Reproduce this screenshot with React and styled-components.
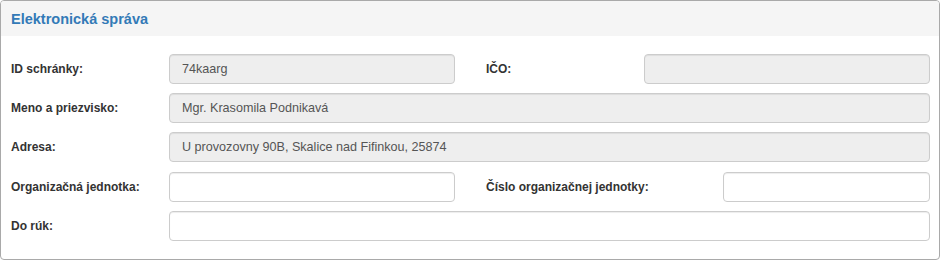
import React from "react";
import styled, { createGlobalStyle } from "styled-components";

const Global = createGlobalStyle`
  html, body { margin: 0; padding: 0; background: #fff; }
  body { font-family: "Liberation Sans", Arial, sans-serif; }
  * { box-sizing: border-box; }
`;

const Panel = styled.section`
  width: 940px;
  height: 260px;
  border: 1px solid #a9a9a9;
  border-radius: 4px;
  overflow: hidden;
  background: #fff;
`;

const Header = styled.div`
  height: 35px;
  background: #f5f5f5;
  display: flex;
  align-items: center;
  padding-left: 10px;
`;

const Title = styled.h3`
  margin: 0;
  font-size: 14.5px;
  font-weight: bold;
  color: #337ab7;
`;

const Body = styled.div`
  padding: 18px 9px 0 10px;
  display: flex;
  flex-direction: column;
  gap: 9px;
`;

const Row = styled.div`
  display: grid;
  grid-template-columns: ${(p) => p.$cols};
  align-items: center;
  height: 30px;
  margin-top: ${(p) => (p.$extra ? "1px" : "0")};
`;

const Label = styled.label`
  font-size: 12px;
  font-weight: bold;
  color: #333;
`;

const Input = styled.input`
  height: 30px;
  width: 100%;
  border: 1px solid #ccc;
  border-radius: 4px;
  padding: 0 12px;
  font-family: "Liberation Sans", Arial, sans-serif;
  font-size: 12.6px;
  color: #555;
  background: ${(p) => (p.readOnly ? "#eeeeee" : "#fff")};
  box-shadow: inset 0 1px 1px rgba(0, 0, 0, 0.075);
  outline: none;
`;

const Spacer = styled.div``;

const PAIR = "158px 286px 31px 158px 286px";
const PAIR2 = "158px 286px 31px 237px 207px";
const FULL = "158px 1fr";

export default function App() {
  return (
    <>
      <Global />
      <Panel>
        <Header>
          <Title>Elektronická správa</Title>
        </Header>
        <Body>
          <Row $cols={PAIR}>
            <Label>ID schránky:</Label>
            <Input readOnly defaultValue="74kaarg" />
            <Spacer />
            <Label>IČO:</Label>
            <Input readOnly defaultValue="" />
          </Row>
          <Row $cols={FULL}>
            <Label>Meno a priezvisko:</Label>
            <Input readOnly defaultValue="Mgr. Krasomila Podnikavá" />
          </Row>
          <Row $cols={FULL}>
            <Label>Adresa:</Label>
            <Input readOnly defaultValue="U provozovny 90B, Skalice nad Fifinkou, 25874" />
          </Row>
          <Row $cols={PAIR2} $extra>
            <Label>Organizačná jednotka:</Label>
            <Input />
            <Spacer />
            <Label>Číslo organizačnej jednotky:</Label>
            <Input />
          </Row>
          <Row $cols={FULL}>
            <Label>Do rúk:</Label>
            <Input />
          </Row>
        </Body>
      </Panel>
    </>
  );
}
